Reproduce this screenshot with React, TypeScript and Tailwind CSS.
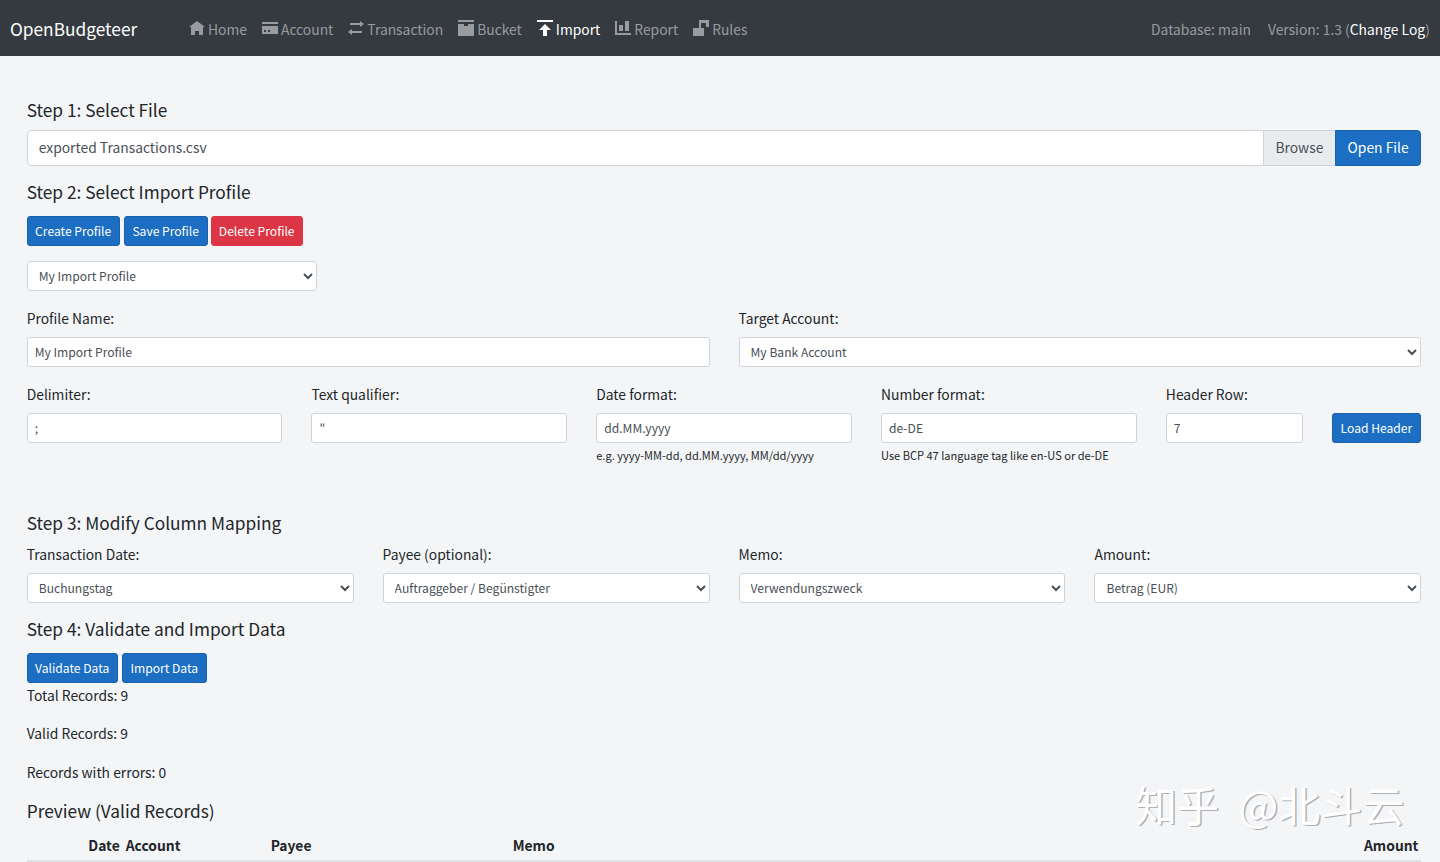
const font = "[font-family:'Noto_Sans_CJK_SC','Source_Sans_Pro',sans-serif]";

const icons: Record<string, { d: string; h: number }> = {
  home: { d: "M4 0l-4 3h1v4h2v-2h2v2h2v-4.03l1 .03-4-3z", h: 7 },
  card: {
    d: "M.25 0c-.14 0-.25.11-.25.25v.75h8v-.75c0-.14-.11-.25-.25-.25h-7.5zm-.25 2v3.75c0 .14.11.25.25.25h7.5c.14 0 .25-.11.25-.25v-3.75h-8zm1 2h1v1h-1v-1zm2 0h1v1h-1v-1z",
    h: 6,
  },
  transfer: { d: "M6 0v1h-5v1h5v1l2-1.5-2-1.5zm-4 4l-2 1.5 2 1.5v-1h5v-1h-5v-1z", h: 7 },
  box: {
    d: "M0 0v1h8v-1h-8zm0 2v5.91c0 .05.04.09.09.09h7.81c.05 0 .09-.04.09-.09v-5.91h-2.97v1.03h-2v-1.03h-3.03z",
    h: 8,
  },
  upload: { d: "M0 0v1h8v-1h-8zm4 2l-3 3h2v3h2v-3h2l-3-3z", h: 8 },
  chart: { d: "M0 0v7h8v-1h-7v-6h-1zm5 0v5h2v-5h-2zm-3 2v3h2v-3h-2z", h: 7 },
  fork: { d: "M3 0h5v3.5h-1.5v-2h-2.5v2.5h1.5v4h-5.5v-4h3z", h: 8 },
};

const navItems = [
  { label: "Home", icon: "home" },
  { label: "Account", icon: "card" },
  { label: "Transaction", icon: "transfer" },
  { label: "Bucket", icon: "box" },
  { label: "Import", icon: "upload", active: true },
  { label: "Report", icon: "chart" },
  { label: "Rules", icon: "fork" },
];

function Heading({ children, className = "" }: { children: string; className?: string }) {
  return <h5 className={`text-[17.3px] leading-[24px] font-normal text-[#212529] ${className}`}>{children}</h5>;
}

function Btn({ children, red = false, className = "" }: { children: string; red?: boolean; className?: string }) {
  return (
    <button
      className={`h-[30px] whitespace-nowrap rounded-[3px] border px-0 pb-[1px] text-[12.1px] leading-[20px] text-white ${
        red ? "border-[#dc3545] bg-[#dc3545]" : "border-[#1861ac] bg-[#1b6ec2]"
      } ${className}`}
    >
      {children}
    </button>
  );
}

function Label({ children }: { children: string }) {
  return <label className="mb-[7px] block text-[13.85px] leading-[24px] text-[#212529]">{children}</label>;
}

function TextInput({ value }: { value: string }) {
  return (
    <input
      readOnly
      value={value}
      className="block h-[30px] w-full rounded-[3px] border border-[#ced4da] bg-white px-[7px] pb-[1px] text-[12.1px] text-[#495057]"
    />
  );
}

function Select({ value, className = "w-full" }: { value: string; className?: string }) {
  return (
    <select
      defaultValue={value}
      className={`block h-[30px] rounded-[3px] border border-[#ced4da] bg-white pb-[1px] pl-[7px] pr-1 text-[12.1px] text-[#495057] ${className}`}
    >
      <option>{value}</option>
    </select>
  );
}

export default function App() {
  return (
    <div className={`h-[862px] overflow-hidden bg-[#f4f5f7] ${font}`}>
      <nav className="flex h-[56px] items-center bg-[#343a40] pl-[10px] pr-[10px] pt-[1px]">
        <span className="w-[179px] text-[17.3px] leading-[24px] text-white">OpenBudgeteer</span>
        <ul className="flex gap-[15px]">
          {navItems.map((item) => {
            const icon = icons[item.icon];
            return (
              <li
                key={item.label}
                className={`flex items-center gap-[3px] text-[13.85px] leading-[24px] ${
                  item.active ? "text-white" : "text-[#999c9f]"
                }`}
              >
                <svg viewBox={`0 0 8 ${icon.h}`} width={16} height={icon.h * 2} className="-translate-y-[1px] fill-current">
                  <path d={icon.d} />
                </svg>
                {item.label}
              </li>
            );
          })}
        </ul>
        <div className="ml-auto flex gap-[17px] text-[13.85px] leading-[24px] text-[#999c9f]">
          <span>Database: main</span>
          <span>
            Version: 1.3 (<span className="text-white">Change Log</span>)
          </span>
        </div>
      </nav>

      <main className="pl-[26.7px] pr-[18.6px] pt-[42px]">
        <Heading>Step 1: Select File</Heading>
        <div className="mt-2 flex h-[36px]">
          <div className="flex flex-1 items-center rounded-l-[4px] border border-[#ced4da] bg-white px-[11px] pb-[1px] text-[13.85px] text-[#495057]">
            exported Transactions.csv
          </div>
          <div className="flex w-[71px] items-center justify-center border-y border-[#ced4da] bg-[#e9ecef] pb-[1px] text-[13.85px] text-[#495057]">
            Browse
          </div>
          <button className="w-[86.5px] rounded-r-[4px] border border-[#1861ac] bg-[#1b6ec2] pb-[1px] text-[13.85px] text-white">
            Open File
          </button>
        </div>

        <Heading className="mt-[14px]">Step 2: Select Import Profile</Heading>
        <div className="mt-3 flex gap-1">
          <Btn className="w-[93px]">Create Profile</Btn>
          <Btn className="w-[84px]">Save Profile</Btn>
          <Btn red className="-ml-[1px] w-[92px]">Delete Profile</Btn>
        </div>
        <Select value="My Import Profile" className="mt-[15px] w-[290px]" />

        <div className="mt-[15px] grid grid-cols-2 gap-x-[29px]">
          <div>
            <Label>Profile Name:</Label>
            <TextInput value="My Import Profile" />
          </div>
          <div>
            <Label>Target Account:</Label>
            <Select value="My Bank Account" />
          </div>
        </div>

        <div className="mt-[15px] grid grid-cols-[repeat(4,255.7px)_137px_89px] gap-x-[29.1px]">
          <div>
            <Label>Delimiter:</Label>
            <TextInput value=";" />
          </div>
          <div>
            <Label>Text qualifier:</Label>
            <TextInput value={'"'} />
          </div>
          <div>
            <Label>Date format:</Label>
            <TextInput value="dd.MM.yyyy" />
            <p className="mt-[3px] text-[11.05px] leading-[18px] text-[#212529]">e.g. yyyy-MM-dd, dd.MM.yyyy, MM/dd/yyyy</p>
          </div>
          <div>
            <Label>Number format:</Label>
            <TextInput value="de-DE" />
            <p className="mt-[3px] text-[11.05px] leading-[18px] text-[#212529]">Use BCP 47 language tag like en-US or de-DE</p>
          </div>
          <div>
            <Label>Header Row:</Label>
            <TextInput value="7" />
          </div>
          <div className="pt-[31px]">
            <Btn className="w-full">Load Header</Btn>
          </div>
        </div>

        <Heading className="mt-[47px]">Step 3: Modify Column Mapping</Heading>
        <div className="mt-[7px] grid grid-cols-4 gap-x-[29px]">
          {[
            ["Transaction Date:", "Buchungstag"],
            ["Payee (optional):", "Auftraggeber / Begünstigter"],
            ["Memo:", "Verwendungszweck"],
            ["Amount:", "Betrag (EUR)"],
          ].map(([label, value]) => (
            <div key={label}>
              <Label>{label}</Label>
              <Select value={value} />
            </div>
          ))}
        </div>

        <Heading className="mt-[14px]">Step 4: Validate and Import Data</Heading>
        <div className="mt-3 flex gap-1">
          <Btn className="w-[91px]">Validate Data</Btn>
          <Btn className="w-[85px]">Import Data</Btn>
        </div>
        <div className="text-[13.85px] leading-[24px] text-[#212529]">
          <p className="mb-[14.4px]">Total Records: 9</p>
          <p className="mb-[14.4px]">Valid Records: 9</p>
          <p>Records with errors: 0</p>
        </div>

        <Heading className="mt-[15px]">Preview (Valid Records)</Heading>
        <table className="mt-[10px] w-full table-fixed text-[13.85px] text-[#212529]">
          <thead>
            <tr className="border-b-2 border-[#dee2e6]">
              <th className="w-[96px] pb-[3px] pr-[3px] text-right font-bold leading-[24px]">Date</th>
              <th className="w-[145px] pb-[3px] pl-[3px] text-left font-bold leading-[24px]">Account</th>
              <th className="w-[242px] pb-[3px] pl-[3px] text-left font-bold leading-[24px]">Payee</th>
              <th className="pb-[3px] pl-[3px] text-left font-bold leading-[24px]">Memo</th>
              <th className="w-[100px] pb-[3px] pr-[3px] text-right font-bold leading-[24px]">Amount</th>
            </tr>
          </thead>
        </table>
      </main>

      {/* watermark over the page corner */}
      <div className="absolute left-[1135px] top-[776px] text-[42px] leading-[56px] whitespace-nowrap text-white [word-spacing:10px] [text-shadow:1.5px_1px_0_#aeb0b2]">
        知乎 @北斗云
      </div>
    </div>
  );
}
